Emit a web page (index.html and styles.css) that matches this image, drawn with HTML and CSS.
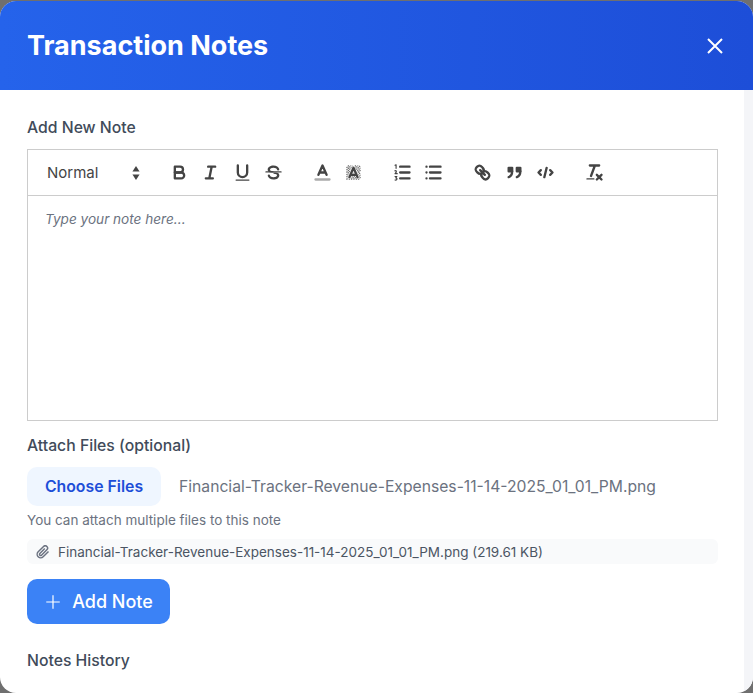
FILE: index.html
```html
<!DOCTYPE html>
<html lang="en">
<head>
  <meta charset="UTF-8" />
  <title>Transaction Notes</title>
  <link rel="stylesheet" href="styles.css">
</head>
<body>
  <div class="modal">
    <!-- Header -->
    <div class="modal-header">
      <h1>Transaction Notes</h1>
      <button class="close-button" aria-label="Close">
        <svg viewBox="0 0 24 24" width="24" height="24"><path d="M5 5L19 19M19 5L5 19"/></svg>
      </button>
    </div>

    <div class="modal-scroll">
      <div class="modal-body">
        <h2 class="label">Add New Note</h2>

        <div class="editor">
          <div class="toolbar">
            <div class="picker">
              <span>Normal</span>
              <svg class="ql arrows" viewBox="0 0 18 18"><polygon class="fill" points="7 8.2 9 5 11 8.2 7 8.2"/><polygon class="fill" points="7 9.8 9 13 11 9.8 7 9.8"/></svg>
            </div>
            <div class="tool-group">
              <svg class="ql" viewBox="0 0 18 18"><path d="M5,4H9.5A2.5,2.5,0,0,1,12,6.5v0A2.5,2.5,0,0,1,9.5,9H5V4Z"/><path d="M5,9h5.5A2.5,2.5,0,0,1,13,11.5v0A2.5,2.5,0,0,1,10.5,14H5V9Z"/></svg>
              <svg class="ql" viewBox="0 0 18 18"><path d="M7 4H13M5 14H11M8 14L10 4"/></svg>
              <svg class="ql" viewBox="0 0 18 18"><path d="M5,3V9a4.012,4.012,0,0,0,4,4H9a4.012,4.012,0,0,0,4-4V3"/><rect class="fill" height="1" rx=".5" ry=".5" width="12" x="3" y="15"/></svg>
              <svg class="ql" viewBox="0 0 18 18"><path class="thin" d="M15.5 8.5H2.5"/><path class="fill" d="M9.007,8C6.542,7.791,6,7.519,6,6.5,6,5.792,7.283,5,9,5c1.571,0,2.765.679,2.976,1.51a1,1,0,0,0,1.939-.49C13.5,4.474,11.467,3,9,3,6.215,3,4,4.521,4,6.5c0,1.635.82,2.5,3.5,2.5H9.007Z"/><path class="fill" d="M8.984,10C11.457,10.208,12,10.479,12,11.5c0,.708-1.283,1.5-3,1.5-1.571,0-2.765-.679-2.976-1.51a1,1,0,0,0-1.939.49C4.5,13.526,6.533,15,9,15c2.785,0,5-1.521,5-3.5,0-1.635-.82-2.5-3.5-2.5H8.984Z"/></svg>
            </div>
            <div class="tool-group">
              <svg class="ql" viewBox="0 0 18 18"><path class="label-line" d="M3 15H15"/><path d="M5.5 11L9 3L12.5 11M11.63 9H6.38"/></svg>
              <svg class="ql" viewBox="0 0 18 18"><path class="hatch" d="M3 5L5 3M3 7L7 3M3 9L9 3M3 11L11 3M3 13L13 3M3 15L15 3M5 15L15 5M7 15L15 7M9 15L15 9M11 15L15 11M13 15L15 13"/><path class="halo" d="M5.5 13L9 5L12.5 13"/><path d="M5.5 13L9 5L12.5 13M11.63 11H6.38"/></svg>
            </div>
            <div class="tool-group">
              <svg class="ql" viewBox="0 0 18 18"><path d="M7 4H15M7 9H15M7 14H15"/><path class="thin" d="M2.6 2.8L3.5 2.4V5.4M2.5 7.6C3.8 7 4.5 8.2 2.6 10H4.5M2.6 12.4H4.2L3.2 13.6C4.8 13.6 4.6 15.8 2.6 15.4"/></svg>
              <svg class="ql" viewBox="0 0 18 18"><path d="M6 4H15M6 9H15M6 14H15M3 4H3M3 9H3M3 14H3"/></svg>
            </div>
            <div class="tool-group">
              <svg class="ql" viewBox="0 0 18 18"><path d="M7 7L11 11"/><path d="M8.9,4.577a3.476,3.476,0,0,1,.36,4.679A3.476,3.476,0,0,1,4.577,8.9C3.185,7.5,2.035,6.4,4.217,4.217S7.5,3.185,8.9,4.577Z"/><path d="M13.423,9.1a3.476,3.476,0,0,0-4.679-.36,3.476,3.476,0,0,0,.36,4.679c1.392,1.392,2.5,2.542,4.679.36S14.815,10.5,13.423,9.1Z"/></svg>
              <svg class="ql" viewBox="0 0 18 18"><rect class="solid" height="3" width="3" x="4" y="5"/><rect class="solid" height="3" width="3" x="11" y="5"/><path d="M7,8c0,4.031-3,5-3,5"/><path d="M14,8c0,4.031-3,5-3,5"/></svg>
              <svg class="ql" viewBox="0 0 18 18"><path d="M5 7L3 9L5 11M13 7L15 9L13 11M10 5L8 13"/></svg>
            </div>
            <div class="tool-group">
              <svg class="ql" viewBox="0 0 18 18"><path d="M5 3H13M6 12L9.35 3M11 11L15 15M15 11L11 15"/><rect class="fill" height="1" rx=".5" ry=".5" width="7" x="2" y="14"/></svg>
            </div>
          </div>
          <div class="editor-area">Type your note here...</div>
        </div>

        <h2 class="label attach-label">Attach Files (optional)</h2>
        <div class="file-row">
          <button class="file-button">Choose Files</button>
          <span class="file-name">Financial-Tracker-Revenue-Expenses-11-14-2025_01_01_PM.png</span>
        </div>
        <p class="hint">You can attach multiple files to this note</p>

        <div class="file-item">
          <svg viewBox="0 0 24 24" width="14" height="14"><path d="M21.44 11.05l-9.19 9.19a6 6 0 0 1-8.49-8.49l9.19-9.19a4 4 0 0 1 5.66 5.66l-9.2 9.19a2 2 0 0 1-2.83-2.83l8.49-8.48"/></svg>
          <span>Financial-Tracker-Revenue-Expenses-11-14-2025_01_01_PM.png (219.61 KB)</span>
        </div>

        <button class="add-button">
          <svg viewBox="0 0 24 24" width="18" height="18"><path d="M12 3V21M3 12H21"/></svg>
          Add Note
        </button>

        <h2 class="label history-label">Notes History</h2>
      </div>
      <div class="scroll-track"></div>
    </div>
  </div>
</body>
</html>
```

FILE: styles.css
```css
* {
  box-sizing: border-box;
}
html, body {
  height: 100%;
}
body {
  margin: 0;
  font-family: 'Inter', sans-serif;
  background: #6f6f6f;
  overflow: hidden;
}
.modal {
  height: 692px;
  margin-top: 1px;
  border-radius: 16px;
  overflow: hidden;
  background: white;
  display: flex;
  flex-direction: column;
}
.modal-header {
  height: 89px;
  flex: none;
  padding: 0 26px 0 27px;
  display: flex;
  align-items: center;
  justify-content: space-between;
  color: white;
  background: linear-gradient(90deg, #2563eb, #1d4ed8);
}
.modal-header h1 {
  margin: 0;
  font-size: 27px;
  font-weight: 700;
}
.close-button {
  padding: 0;
  border: none;
  background: none;
  display: flex;
}
.close-button svg {
  fill: none;
  stroke: white;
  stroke-width: 2;
}

.modal-scroll {
  flex: 1;
  display: flex;
  min-height: 0;
}
.modal-body {
  flex: 1;
  padding: 28px 26px 0 27px;
}
.scroll-track {
  width: 9px;
  background: #f4f5f8;
}

.label {
  margin: 0;
  font-size: 15.75px;
  line-height: 20px;
  font-weight: 500;
  color: #414b5a;
}

.editor {
  margin-top: 11px;
  border: 1px solid #ccc;
}
.toolbar {
  height: 46px;
  padding-left: 19px;
  display: flex;
  align-items: center;
  border-bottom: 1px solid #ccc;
}
.picker {
  width: 122px;
  display: flex;
  align-items: center;
  justify-content: space-between;
  padding-right: 17px;
  font-size: 15px;
  color: #444;
}
.tool-group {
  display: flex;
  gap: 10.3px;
  margin-right: 28px;
}
.ql {
  width: 21px;
  height: 21px;
  flex: none;
  fill: none;
  stroke: #444;
  stroke-width: 2;
  stroke-linecap: round;
  stroke-linejoin: round;
}
.ql.arrows {
  width: 32px;
  height: 32px;
}
.ql .fill {
  fill: #444;
  stroke: none;
}
.ql .solid {
  fill: #444;
}
.ql .thin {
  stroke-width: 1;
}
.ql .hatch {
  stroke: #666;
  stroke-width: 1;
  stroke-linecap: butt;
  stroke-dasharray: 1.2 .5;
}
.ql .halo {
  stroke: white;
  stroke-width: 3;
}
.ql .label-line {
  stroke: #aaa;
}
.editor-area {
  height: 224px;
  padding: 15px 17px;
  font-size: 13.6px;
  font-style: italic;
  color: #6b7280;
}

.attach-label {
  margin-top: 15px;
}
.file-row {
  margin-top: 11px;
  display: flex;
  align-items: center;
  gap: 18px;
}
.file-button {
  width: 134px;
  height: 39px;
  border: none;
  border-radius: 10px;
  background: #eff6ff;
  color: #1d4ed8;
  font-family: inherit;
  font-size: 15.8px;
  font-weight: 600;
}
.file-name {
  font-size: 15.7px;
  color: #6b7280;
}
.hint {
  margin: 5px 0 0;
  font-size: 13.5px;
  line-height: 18px;
  color: #6b7280;
}
.file-item {
  margin-top: 10px;
  height: 25px;
  padding-left: 9px;
  display: flex;
  align-items: center;
  gap: 8px;
  border-radius: 6px;
  background: #f9fafb;
  font-size: 13.5px;
  color: #4b5563;
}
.file-item svg {
  fill: none;
  stroke: #6b7280;
  stroke-width: 2.5;
}
.add-button {
  margin-top: 15px;
  width: 143px;
  height: 45px;
  border: none;
  border-radius: 10px;
  background: #3b82f6;
  color: white;
  font-family: inherit;
  font-size: 18px;
  font-weight: 500;
  display: flex;
  align-items: center;
  justify-content: center;
  gap: 10px;
}
.add-button svg {
  fill: none;
  stroke: white;
  stroke-width: 1.6;
}
.history-label {
  margin-top: 27px;
}
```
